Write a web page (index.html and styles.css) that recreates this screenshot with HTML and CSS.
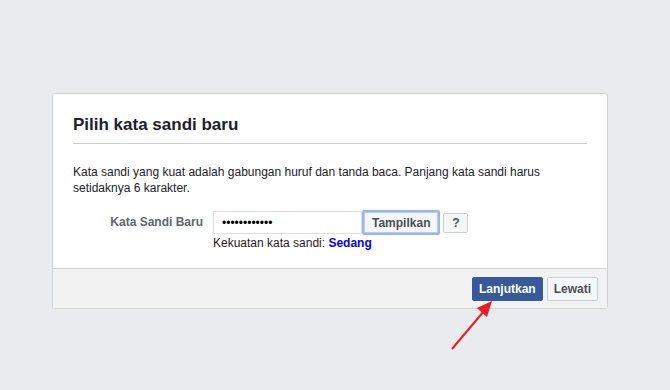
FILE: index.html
```html
<!DOCTYPE html>
<html lang="id">
<head>
    <meta charset="UTF-8">
    <meta name="viewport" content="width=device-width, initial-scale=1.0">
    <title>Pilih kata sandi baru</title>
    <link rel="stylesheet" href="styles.css">
</head>
<body>
    <div class="kartu">
        <div class="isi">
            <h2 class="judul">Pilih kata sandi baru</h2>
            <p class="keterangan">Kata sandi yang kuat adalah gabungan huruf dan tanda baca. Panjang kata sandi harus setidaknya 6 karakter.</p>

            <div class="baris">
                <label class="label" for="sandi">Kata Sandi Baru</label>
                <div class="kolom">
                    <div class="kontrol">
                        <input class="masukan" id="sandi" type="password" value="rahasia12345">
                        <button class="tombol tampil">Tampilkan</button>
                        <button class="tombol bantuan">?</button>
                    </div>
                    <div class="kekuatan">Kekuatan kata sandi: <b class="sedang">Sedang</b></div>
                </div>
            </div>
        </div>
        <div class="kaki">
            <button class="tombol utama">Lanjutkan</button>
            <button class="tombol lewati">Lewati</button>
        </div>
    </div>

    <!-- panah merah penunjuk tombol -->
    <svg class="panah" width="60" height="60" viewBox="0 0 60 60">
        <line x1="12" y1="54" x2="44" y2="16" stroke="#ec1c24" stroke-width="2"/>
        <polygon points="52,6 37,13 47,22" fill="#ec1c24"/>
    </svg>
</body>
</html>
```

FILE: styles.css
```css
body {
    margin: 0;
    background: #e9ebee;
    font-family: "Liberation Sans", Arial, sans-serif;
    font-size: 12px;
    color: #1d2129;
}

.kartu {
    margin: 93px 0 0 52px;
    width: 554px;
    background: #fff;
    border: 1px solid #cfd1d5;
    border-radius: 3px;
    overflow: hidden;
}

.isi {
    padding: 0 20px 0 20px;
}

.judul {
    margin: 0;
    padding: 20px 0 8px 0;
    font-size: 17px;
    line-height: 21px;
    border-bottom: 1px solid #ccd0d5;
}

.keterangan {
    margin: 20px 0 14px 0;
    line-height: 16px;
}

.baris {
    display: flex;
    align-items: flex-start;
    padding-bottom: 17px;
}

.label {
    width: 130px;
    padding-right: 10px;
    text-align: right;
    font-weight: bold;
    color: #606770;
    line-height: 22px;
    margin-top: 1px;
}

.kontrol {
    display: flex;
    align-items: center;
}

.masukan {
    box-sizing: border-box;
    width: 149px;
    height: 23px;
    margin: 0;
    padding: 0 8px;
    border: 1px solid #dddfe2;
    font-family: "Liberation Sans", Arial, sans-serif;
    font-size: 12px;
    outline: none;
}

.tombol {
    box-sizing: border-box;
    font-family: "Liberation Sans", Arial, sans-serif;
    font-size: 12px;
    font-weight: bold;
    color: #4b4f56;
    background: #f5f6f7;
    border: 1px solid #ccd0d5;
    border-radius: 2px;
    padding: 0 8px;
    cursor: pointer;
}

.tampil {
    height: 25px;
    margin-left: 0;
    padding: 0 8px;
    border: 2px solid #9bb6ee;
    box-shadow: inset 0 0 0 1px #bcccec;
}

.bantuan {
    height: 20px;
    width: 25px;
    margin-left: 3px;
    padding: 0;
}

.kekuatan {
    margin-top: 1px;
    line-height: 15px;
    color: #2b1a1e;
}

.sedang {
    color: #0000f0;
}

.kaki {
    display: flex;
    justify-content: flex-end;
    gap: 4px;
    padding: 8px 9px 7px 0;
    background: #f2f2f2;
    border-top: 1px solid #d3d6db;
}

.kaki .tombol {
    height: 24px;
}

.utama {
    background: #385a9b;
    border-color: #385a9b;
    color: #fff;
    padding: 0 6px;
}

.lewati {
    padding: 0 6px;
    background: #f6f7f9;
}

.panah {
    position: absolute;
    left: 440px;
    top: 295px;
}
```
